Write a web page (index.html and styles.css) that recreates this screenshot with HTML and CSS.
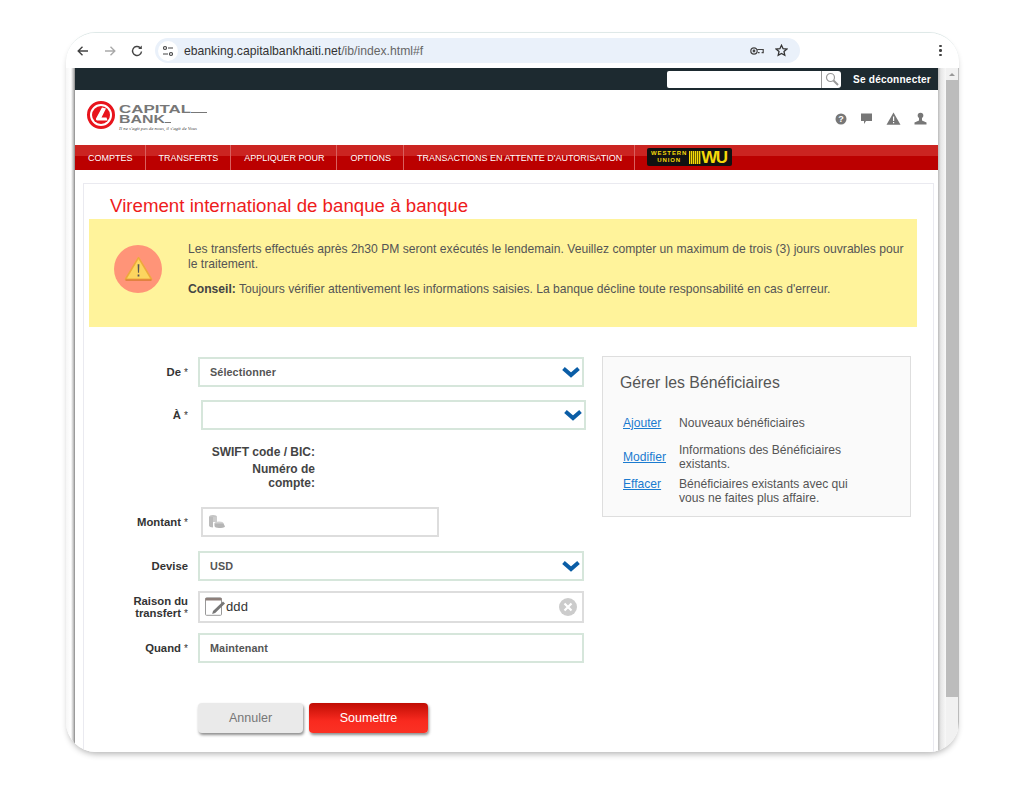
FILE: index.html
```html
<!DOCTYPE html>
<html lang="fr">
<head>
    <meta charset="UTF-8">
    <meta name="viewport" content="width=device-width, initial-scale=1.0">
    <title>Virement international</title>
    <link rel="stylesheet" href="styles.css">
</head>
<body>

    <div class="window">

        <!-- barre du navigateur -->
        <div class="toolbar">
            <svg class="tb-icon" width="14" height="14" viewBox="0 0 14 14" fill="none" stroke="#444" stroke-width="1.4"><path d="M12 7H2.5M6.5 2.8L2.2 7l4.3 4.2"/></svg>
            <svg class="tb-icon" width="14" height="14" viewBox="0 0 14 14" fill="none" stroke="#aaa" stroke-width="1.4"><path d="M2 7h9.5M7.5 2.8L11.8 7l-4.3 4.2"/></svg>
            <svg class="tb-icon" width="14" height="14" viewBox="0 0 14 14" fill="none" stroke="#444" stroke-width="1.4"><path d="M11.5 7.5A4.5 4.5 0 1 1 10 3.6"/><path d="M11.8 1.5v3.6H8.2z" fill="#444" stroke="none"/></svg>
            <div class="omnibox">
                <span class="site-info">
                    <svg width="12" height="12" viewBox="0 0 12 12" fill="none" stroke="#444" stroke-width="1.2"><circle cx="3" cy="3" r="1.5"/><path d="M6 3h5M1 9h5"/><circle cx="9" cy="9" r="1.5"/></svg>
                </span>
                <span class="url">ebanking.capitalbankhaiti.net<span class="url-path">/ib/index.html#f</span></span>
                <svg class="key-icon" width="14" height="10" viewBox="0 0 14 10" fill="none" stroke="#444" stroke-width="1.2"><circle cx="4" cy="5" r="3.2"/><circle cx="4" cy="5" r=".8" fill="#444"/><path d="M7.2 3.5h6v3.2h-1.6M9.6 6.7H8"/></svg>
                <svg class="star-icon" width="13" height="13" viewBox="0 0 13 13" fill="none" stroke="#333" stroke-width="1.3"><path d="M6.5 1.3l1.6 3.4 3.7.4-2.8 2.5.8 3.7-3.3-1.9-3.3 1.9.8-3.7L1.2 5.1l3.7-.4z"/></svg>
            </div>
            <div class="dots"><i></i><i></i><i></i></div>
        </div>

        <div class="viewport">
            <div class="gutter"></div>

            <div class="page">
                <div class="topbar">
                    <div class="search">
                        <div class="search-input"></div>
                        <div class="search-btn">
                            <svg width="14" height="14" viewBox="0 0 14 14" fill="none" stroke="#999" stroke-width="1.2"><circle cx="5.5" cy="5.5" r="4"/><path d="M8.5 8.5l4.5 4.5" stroke-width="2"/></svg>
                        </div>
                    </div>
                    <a class="logout">Se déconnecter</a>
                </div>

                <div class="brand">
                    <svg class="logo" width="124" height="36" viewBox="0 0 124 36">
                        <circle cx="15" cy="15" r="12.5" fill="#fff" stroke="#e8141c" stroke-width="3"/>
                        <circle cx="15" cy="15" r="9" fill="#e8141c"/>
                        <path d="M16 7.5L10 18.5q-.5 2 2 2h9.5l-1-3h-5l4.500-9z" fill="#fff"/>
                        <text x="33" y="13" class="logo-word" textLength="72" lengthAdjust="spacingAndGlyphs">CAPITAL</text>
                        <text x="33" y="23" class="logo-word" textLength="46" lengthAdjust="spacingAndGlyphs">BANK</text>
                        <path d="M105 12.500h16M79 22.500h6" stroke="#777" stroke-width="1"/>
                        <text x="33" y="29.500" class="logo-tag" textLength="78" lengthAdjust="spacingAndGlyphs">Il ne s'agit pas de nous, il s'agit de Vous</text>
                    </svg>
                    <div class="brand-icons">
                        <svg width="12" height="12" viewBox="0 0 12 12"><circle cx="6" cy="6" r="5.500" fill="#777"/><text x="6" y="9" class="q-mark">?</text></svg>
                        <svg width="13" height="13" viewBox="0 0 13 13"><path d="M1 1.500h11v7.500H6l-2 3V9H1z" fill="#777"/></svg>
                        <svg width="15" height="13" viewBox="0 0 15 13"><path d="M7.500 0.500L14.500 12.800H.5z" fill="#777"/><path d="M7 4.500h1.200v4.500H7zM7 10h1.200v1.300H7z" fill="#fff"/></svg>
                        <svg width="13" height="13" viewBox="0 0 13 13"><circle cx="6.500" cy="3.500" r="2.800" fill="#777"/><path d="M5 6h3v2.500l4.500 2v2H.5v-2L5 8.500z" fill="#777"/></svg>
                    </div>
                </div>

                <div class="nav">
                    <a class="nav-item">COMPTES</a>
                    <a class="nav-item">TRANSFERTS</a>
                    <a class="nav-item">APPLIQUER POUR</a>
                    <a class="nav-item">OPTIONS</a>
                    <a class="nav-item">TRANSACTIONS EN ATTENTE D'AUTORISATION</a>
                    <div class="wu">
                        <span class="wu-words">WESTERN<br>UNION</span>
                        <span class="wu-stripes"></span>
                        <span class="wu-mark">WU</span>
                    </div>
                </div>

                <div class="panel">
                    <h1 class="title">Virement international de banque à banque</h1>

                    <div class="alert">
                        <div class="alert-badge">
                            <svg width="29" height="26" viewBox="0 0 26 24"><path d="M13 1.500L25 21.500H1z" fill="#fcd55f" stroke="#eea93c" stroke-width="1.500" stroke-linejoin="round"/><path d="M1 21.500h24v1.500H1z" fill="#e07f3c"/><path d="M12.200 7.500h1.600l-.3 8h-1zM12.200 17h1.600v2h-1.600z" fill="#555"/></svg>
                        </div>
                        <div class="alert-text">
                            <p>Les transferts effectués après 2h30 PM seront exécutés le lendemain. Veuillez compter un maximum de trois (3) jours ouvrables pour le traitement.</p>
                            <p><b>Conseil:</b> Toujours vérifier attentivement les informations saisies. La banque décline toute responsabilité en cas d'erreur.</p>
                        </div>
                    </div>

                    <div class="main">
                        <div class="form">
                            <div class="row row-de">
                                <label class="lbl">De <span class="req">*</span></label>
                                <div class="field select">Sélectionner<svg class="chev" width="20" height="12" viewBox="0 0 20 12"><path d="M2.500 2.500L10 9l7.500-6.500" fill="none" stroke="#0a5da6" stroke-width="4"/></svg></div>
                            </div>
                            <div class="row row-a">
                                <label class="lbl">À <span class="req">*</span></label>
                                <div class="field select shifted"><svg class="chev" width="20" height="12" viewBox="0 0 20 12"><path d="M2.500 2.500L10 9l7.500-6.500" fill="none" stroke="#0a5da6" stroke-width="4"/></svg></div>
                            </div>
                            <div class="info">
                                <div class="info-line">SWIFT code / BIC:</div>
                                <div class="info-line info-two">Numéro de<br>compte:</div>
                            </div>
                            <div class="row row-montant">
                                <label class="lbl">Montant <span class="req">*</span></label>
                                <div class="field amount shifted">
                                    <svg width="18" height="15" viewBox="0 0 18 15"><ellipse cx="5" cy="3" rx="4" ry="2" fill="#c4c4c4"/><path d="M1 3v8.500c0 1 1.800 2 4 2V3z" fill="#bbb"/><path d="M9 3v5H5V3z" fill="#ccc"/><ellipse cx="11" cy="9.500" rx="4.500" ry="2" fill="#d0d0d0"/><path d="M6.500 9.500v2.500c0 1 2 2 4.500 2s5.500-.5 6-1.500l-1.500-3z" fill="#b5b5b5"/></svg>
                                </div>
                            </div>
                            <div class="row row-devise">
                                <label class="lbl">Devise</label>
                                <div class="field select">USD<svg class="chev" width="20" height="12" viewBox="0 0 20 12"><path d="M2.500 2.500L10 9l7.500-6.500" fill="none" stroke="#0a5da6" stroke-width="4"/></svg></div>
                            </div>
                            <div class="row row-raison">
                                <label class="lbl">Raison du<br>transfert <span class="req">*</span></label>
                                <div class="field reason">
                                    <svg width="22" height="20" viewBox="0 0 22 20"><rect x=".5" y=".8" width="16" height="17.500" rx="1" fill="#fff" stroke="#999"/><path d="M.5 1h16v2.500H.5z" fill="#8d7f7a"/><path d="M8 14l-.8 3 3-1L20 6.500 18 4.500z" fill="#777"/></svg>
                                    <span class="reason-val">ddd</span>
                                    <svg class="clear" width="18" height="18" viewBox="0 0 18 18"><circle cx="9" cy="9" r="9" fill="#ccc"/><path d="M5.500 5.500l7 7M12.500 5.500l-7 7" stroke="#fff" stroke-width="2.200"/></svg>
                                </div>
                            </div>
                            <div class="row row-quand">
                                <label class="lbl">Quand <span class="req">*</span></label>
                                <div class="field">Maintenant</div>
                            </div>
                            <div class="buttons">
                                <button class="btn btn-cancel">Annuler</button>
                                <button class="btn btn-submit">Soumettre</button>
                            </div>
                        </div>

                        <div class="side">
                            <h2 class="side-title">Gérer les Bénéficiaires</h2>
                            <div class="side-row side-row-1">
                                <a class="side-link">Ajouter</a>
                                <span class="side-desc">Nouveaux bénéficiaires</span>
                            </div>
                            <div class="side-row side-row-2">
                                <a class="side-link">Modifier</a>
                                <span class="side-desc">Informations des Bénéficiaires existants.</span>
                            </div>
                            <div class="side-row side-row-3">
                                <a class="side-link">Effacer</a>
                                <span class="side-desc">Bénéficiaires existants avec qui vous ne faites plus affaire.</span>
                            </div>
                        </div>
                    </div>
                </div>
            </div>

            <div class="page-edge"></div>

            <div class="scrollbar">
                <div class="scroll-arrow"></div>
                <div class="scroll-thumb"></div>
            </div>
        </div>
    </div>

</body>
</html>
```

FILE: styles.css
```css
* {
    box-sizing: border-box;
}
body {
    font-family: "Liberation Sans", Arial, sans-serif;
    background-color: #fff;
    margin: 0;
    padding: 32px 0 0 66px;
    overflow: hidden;
    height: 786px;
}
.window {
    width: 893px;
    height: 720px;
    background: #fff;
    border-radius: 30px;
    border-top: 1px solid #dfe9e8;
    box-shadow: 0 4px 6px -2px rgba(0, 0, 0, 0.3);
    overflow: hidden;
    display: flex;
    flex-direction: column;
}

/* navigateur */
.toolbar {
    height: 35px;
    flex: none;
    display: flex;
    align-items: center;
    padding-left: 10px;
    background: #fff;
}
.tb-icon {
    margin-right: 13px;
}
.omnibox {
    width: 645px;
    height: 25px;
    margin-left: -2px;
    background: #eaf1fa;
    border-radius: 13px;
    display: flex;
    align-items: center;
    font-size: 12.200px;
    color: #333;
}
.site-info {
    width: 20px;
    height: 20px;
    margin-left: 3px;
    background: #fff;
    border-radius: 50%;
    display: flex;
    align-items: center;
    justify-content: center;
}
.url {
    margin-left: 6px;
    flex: 1;
}
.url-path {
    color: #666;
}
.key-icon {
    margin-right: 11px;
}
.star-icon {
    margin-right: 12px;
}
.dots {
    margin-left: 139px;
    display: flex;
    flex-direction: column;
    gap: 2px;
}
.dots i {
    width: 2.500px;
    height: 2.500px;
    background: #444;
    border-radius: 50%;
}

.viewport {
    flex: 1;
    display: flex;
    min-height: 0;
}
.gutter {
    width: 9px;
    flex: none;
    background: linear-gradient(90deg, #f6f6f6 0, #fff 55%, #bbb 85%, #888 100%);
}
.page {
    width: 863px;
    flex: none;
    background: #fff;
}
.page-edge {
    width: 8px;
    flex: none;
    background: linear-gradient(90deg, #bbb 0, #e6e6e6 35%, #f8f8f8 100%);
}
.scrollbar {
    width: 13px;
    flex: none;
    background: #f1f1f1;
    border-right: 1px solid #bbb;
    padding-top: 5px;
}
.scroll-arrow {
    width: 0;
    height: 0;
    margin: 0 auto 4px;
    border-left: 3px solid transparent;
    border-right: 3px solid transparent;
    border-bottom: 3px solid #999;
}
.scroll-thumb {
    height: 617px;
    background: #bcbcbc;
}

/* entete */
.topbar {
    height: 22px;
    background: #1d2a30;
    display: flex;
    align-items: center;
    justify-content: flex-end;
    padding-right: 7px;
}
.search {
    display: flex;
    height: 17px;
    margin-right: 12px;
}
.search-input {
    width: 154px;
    background: #fff;
    border-radius: 2px 0 0 2px;
}
.search-btn {
    width: 20px;
    background: #fff;
    border-left: 1px solid #999;
    border-radius: 0 3px 3px 0;
    display: flex;
    align-items: center;
    justify-content: center;
}
.logout {
    color: #fff;
    font-size: 10.100px;
    font-weight: bold;
    letter-spacing: 0.2px;
}
.brand {
    height: 55px;
    display: flex;
    align-items: center;
    justify-content: space-between;
    padding: 0 11px 0 11px;
}
.logo {
    margin-top: 1px;
}
.logo-word {
    font-family: "Liberation Sans", Arial, sans-serif;
    font-size: 11px;
    font-weight: bold;
    fill: #777;
}
.logo-tag {
    font-family: "Liberation Serif", serif;
    font-size: 5px;
    font-style: italic;
    fill: #444;
}
.q-mark {
    font-size: 9px;
    font-weight: bold;
    fill: #fff;
    text-anchor: middle;
}
.brand-icons {
    display: flex;
    align-items: center;
    gap: 13px;
    margin-top: 2px;
}
.nav {
    height: 25px;
    display: flex;
    align-items: stretch;
    background: linear-gradient(180deg, #cb2421 0, #cb2421 45%, #bb0000 46%, #bb0000 100%);
}
.nav-item {
    display: flex;
    align-items: center;
    padding: 0 12px 0 13px;
    color: #fff;
    font-size: 9px;
    border-right: 1px solid #d9605e;
}
.wu {
    width: 85px;
    height: 18px;
    margin: 3px 0 0 12px;
    padding-left: 2px;
    background: #111;
    border-radius: 2px;
    display: flex;
    align-items: center;
    color: #f5d90a;
    font-weight: bold;
}
.wu-words {
    width: 40px;
    font-size: 6px;
    line-height: 7px;
    letter-spacing: 0.9px;
    text-align: center;
}
.wu-stripes {
    width: 12px;
    height: 13px;
    background: repeating-linear-gradient(90deg, #f5d90a 0, #f5d90a 1px, #6d6000 1px, #6d6000 2px);
}
.wu-mark {
    font-size: 17px;
    line-height: 17px;
    letter-spacing: -1.500px;
}

/* contenu */
.panel {
    margin: 13px 4px 0 8px;
    height: 600px;
    border-top: 1px solid #eaeaf0;
    border-left: 1px solid #eaeaf0;
    border-right: 1px solid #eaeaf0;
}
.title {
    margin: 0;
    padding: 11px 0 0 26px;
    height: 35px;
    font-size: 18.700px;
    line-height: 21px;
    font-weight: normal;
    color: #ee1c1c;
}
.alert {
    margin-left: 5px;
    width: 828px;
    height: 108px;
    background: #fff39b;
    display: flex;
    padding: 26px 0 0 25px;
}
.alert-badge {
    width: 48px;
    height: 48px;
    flex: none;
    background: #ff9478;
    border-radius: 50%;
    display: flex;
    align-items: center;
    justify-content: center;
}
.alert-text {
    margin-left: 26px;
    margin-right: 10px;
    margin-top: -3px;
    font-size: 12.140px;
    line-height: 15px;
    color: #555;
}
.alert-text p {
    margin: 0 0 10px;
}
.alert-text b {
    color: #444;
}
.main {
    display: flex;
    align-items: flex-start;
    padding: 30px 0 0 36px;
}
.form {
    width: 466px;
    flex: none;
}
.row {
    display: flex;
    align-items: center;
}
.lbl {
    width: 68px;
    flex: none;
    margin-right: 10px;
    text-align: right;
    font-size: 11.300px;
    line-height: 12px;
    font-weight: bold;
    color: #333;
}
.req {
    font-size: 10px;
    font-weight: normal;
}
.field {
    width: 386px;
    height: 30px;
    flex: none;
    display: flex;
    align-items: center;
    padding: 0 0 1px 10px;
    border: 2px solid #d6e6db;
    font-size: 10.800px;
    font-weight: bold;
    letter-spacing: 0.1px;
    color: #555;
}
.select {
    justify-content: space-between;
    padding-right: 1px;
}
.shifted {
    margin-left: 3px;
    width: 385px;
}
.chev {
    margin-left: auto;
}
.row-a {
    margin-top: 13px;
}
.info {
    width: 195px;
    margin-top: 15px;
    text-align: right;
    font-size: 12px;
    font-weight: bold;
    color: #444;
}
.info-line {
    line-height: 14px;
}
.info-two {
    margin-top: 3px;
}
.row-montant {
    margin-top: 17px;
}
.amount {
    width: 238px;
    padding-left: 5px;
    border-color: #ddd;
}
.row-devise {
    margin-top: 14px;
}
.row-raison {
    margin-top: 10px;
}
.reason {
    height: 32px;
    padding: 0 5px;
    border-color: #ddd;
}
.reason-val {
    margin: 0 0 1px -1px;
    font-size: 13px;
    font-weight: normal;
    color: #333;
}
.clear {
    margin-left: auto;
}
.row-quand {
    margin-top: 10px;
}
.buttons {
    display: flex;
    gap: 6px;
    margin: 40px 0 0 78px;
}
.btn {
    height: 30px;
    border: none;
    border-radius: 4px;
    font-family: "Liberation Sans", Arial, sans-serif;
    font-size: 12.500px;
    padding: 0;
    box-shadow: 1px 2px 3px rgba(0, 0, 0, 0.45);
}
.btn-cancel {
    width: 105px;
    background: #eaeaea;
    color: #777;
}
.btn-submit {
    width: 119px;
    background: linear-gradient(180deg, #c00d04 0, #f92a1f 60%, #fb3124 100%);
    color: #fff;
}
.side {
    width: 309px;
    height: 161px;
    margin-top: -1px;
    margin-left: 16px;
    background: #fafafa;
    border: 1.500px solid #dedede;
    padding: 15px 0 0 17px;
    color: #555;
    font-size: 12.100px;
}
.side-title {
    margin: 1px 0 0;
    font-size: 15.800px;
    line-height: 20px;
    font-weight: normal;
}
.side-row {
    display: flex;
    align-items: center;
    line-height: 14px;
}
.side-row-1 {
    margin-top: 23px;
}
.side-row-2 {
    margin-top: 13px;
}
.side-row-3 {
    margin-top: 6px;
    align-items: flex-start;
}
.side-link {
    width: 56px;
    flex: none;
    margin-left: 3px;
    color: #1a7bd0;
    text-decoration: underline;
}
.side-desc {
    width: 180px;
}
```
